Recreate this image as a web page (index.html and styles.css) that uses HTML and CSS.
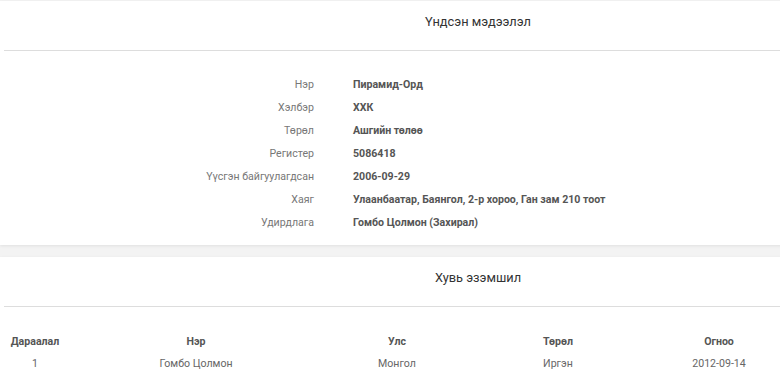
FILE: index.html
```html
<!DOCTYPE html>
<html>
<head>
<meta charset="utf-8">
<link rel="stylesheet" href="styles.css">
</head>
<body>
<div class="page">
  <section class="card card-info">
    <div class="card-head"><h2 class="card-title">Үндсэн мэдээлэл</h2></div>
    <dl class="info">
      <dt>Нэр</dt><dd>Пирамид-Орд</dd>
      <dt>Хэлбэр</dt><dd>ХХК</dd>
      <dt>Төрөл</dt><dd>Ашгийн төлөө</dd>
      <dt>Регистер</dt><dd>5086418</dd>
      <dt>Үүсгэн байгуулагдсан</dt><dd>2006-09-29</dd>
      <dt>Хаяг</dt><dd>Улаанбаатар, Баянгол, 2-р хороо, Ган зам 210 тоот</dd>
      <dt>Удирдлага</dt><dd>Гомбо Цолмон (Захирал)</dd>
    </dl>
  </section>
  <section class="card card-owners">
    <div class="card-head"><h2 class="card-title">Хувь эзэмшил</h2></div>
    <div class="owners">
      <div class="th">Дараалал</div><div class="th">Нэр</div><div class="th">Улс</div><div class="th">Төрөл</div><div class="th">Огноо</div>
      <div class="td">1</div><div class="td">Гомбо Цолмон</div><div class="td">Монгол</div><div class="td">Иргэн</div><div class="td">2012-09-14</div>
    </div>
  </section>
</div>
</body>
</html>
```
FILE: styles.css
```css
html, body {
  margin: 0;
  padding: 0;
}
body {
  background: #f3f3f3;
  font-family: Roboto, "Liberation Sans", sans-serif;
  font-size: 10.6px;
  color: #555;
  overflow: hidden;
}
.page {
  width: 956px;
  padding-top: 1px;
}
.card {
  background: #fff;
  box-shadow: 0 1px 3px rgba(0,0,0,0.08);
}
.card-owners {
  margin-top: 12px;
  height: 140px;
}
.card-head {
  margin-left: 4px;
  height: 49px;
  border-bottom: 1px solid #ddd;
  display: flex;
  justify-content: center;
}
.card-title {
  margin: 0;
  padding-top: 13px;
  font-size: 12.8px;
  font-weight: 400;
  color: #333;
  line-height: 16px;
  padding-right: 4px;
}
.info {
  margin: 0;
  padding: 22px 0 11px;
  display: grid;
  grid-template-columns: 314px auto;
  column-gap: 39px;
  grid-auto-rows: 23px;
  align-items: center;
}
.info dt {
  text-align: right;
  color: #777;
}
.info dd {
  margin: 0;
  font-weight: 700;
  color: #555;
}
.owners {
  margin-left: 4px;
  padding-top: 23px;
  display: grid;
  grid-template-columns: 62px 260px 142px 180px 142px;
  grid-auto-rows: 22px;
  align-items: center;
  text-align: center;
}
.owners .th {
  font-weight: 700;
  color: #555;
}
.owners .td {
  color: #666;
}
```
